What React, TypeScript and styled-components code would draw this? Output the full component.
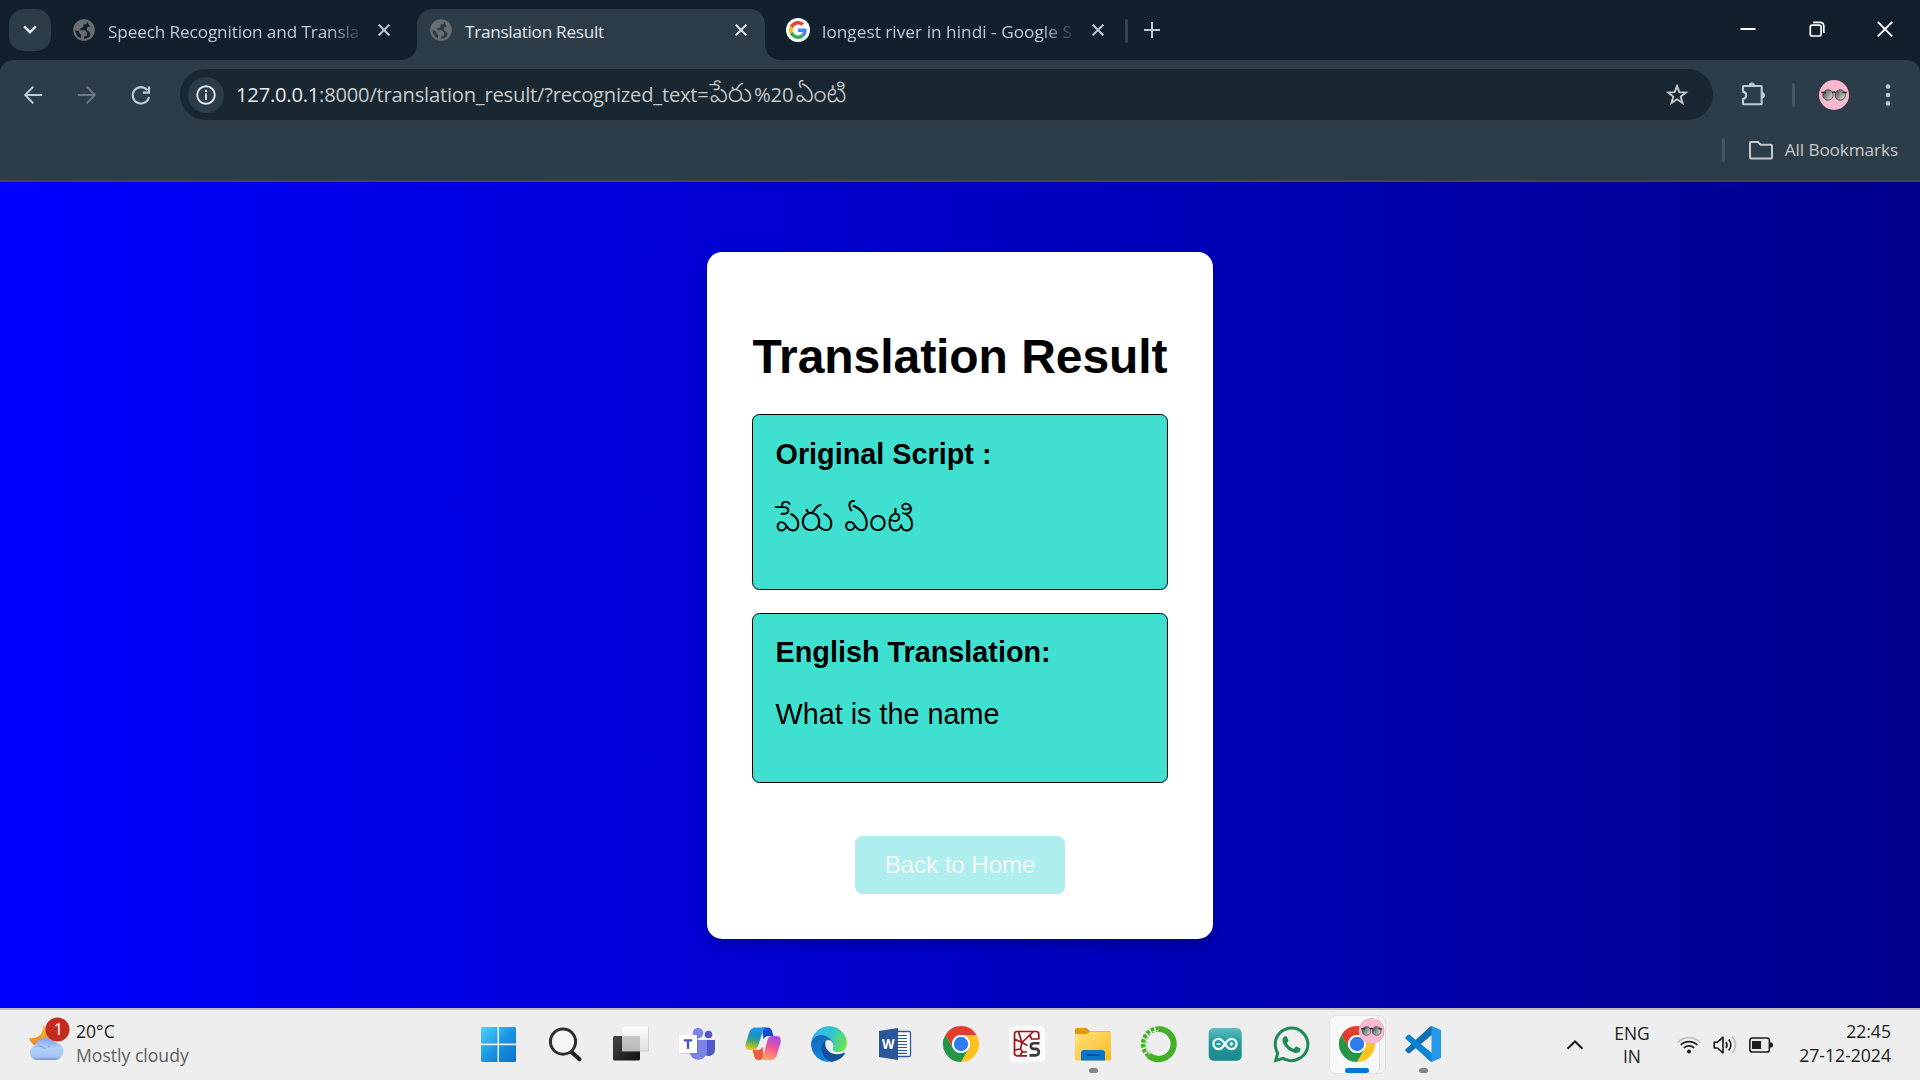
import React from "react";
import styled, { createGlobalStyle } from "styled-components";
import { FaWhatsapp } from "react-icons/fa";

const ui = `"Open Sans", "Noto Sans Telugu", sans-serif`;
const arial = `"Liberation Sans", "Noto Sans Telugu", sans-serif`;

const Global = createGlobalStyle`
  body { margin: 0; overflow: hidden; }
  *, *::before, *::after { box-sizing: border-box; }
  svg { display: block; flex: none; overflow: visible; }
`;

const Desktop = styled.div`
  width: 1920px;
  height: 1080px;
  display: flex;
  flex-direction: column;
  font-family: ${ui};
  background: #11202c;
`;

/* ---------- Tab strip ---------- */
const TabStrip = styled.header`
  height: 60px;
  flex: none;
  display: flex;
  align-items: flex-start;
  padding: 9px 0 0 9px;
  color: #b9cbdd;
`;
const TabSearch = styled.div`
  width: 42px;
  height: 42px;
  border-radius: 15px;
  background: #2d3c49;
  display: grid;
  place-items: center;
  color: #e3e8ec;
`;
const Tab = styled.div<{ $w: number; $active?: boolean; $pl: number; $pr: number }>`
  position: relative;
  width: ${(p) => p.$w}px;
  height: 51px;
  display: flex;
  align-items: center;
  padding: 0 ${(p) => p.$pr}px 9px ${(p) => p.$pl}px;
  border-radius: 15px 15px 0 0;
  background: ${(p) => (p.$active ? "#2d3c49" : "transparent")};
  color: ${(p) => (p.$active ? "#e3e6e9" : "#b9cbdd")};
  ${(p) =>
    p.$active &&
    `&::before, &::after {
      content: ""; position: absolute; bottom: 0; width: 15px; height: 15px;
    }
    &::before { left: -15px; background: radial-gradient(circle at 0 0, transparent 14.5px, #2d3c49 15.2px); }
    &::after { right: -15px; background: radial-gradient(circle at 100% 0, transparent 14.5px, #2d3c49 15.2px); }`}
`;
const TabTitle = styled.span<{ $track: number; $fade?: boolean }>`
  margin-right: auto;
  white-space: nowrap;
  font-size: 17.2px;
  letter-spacing: ${(p) => p.$track}px;
  line-height: 26px;
  padding-top: 3px;
  ${(p) => p.$fade && "mask-image: linear-gradient(90deg, #000 calc(100% - 30px), rgba(0, 0, 0, 0.15));"}
`;
const Favicon = styled.span<{ $gap: number }>`
  margin-right: ${(p) => p.$gap}px;
`;
const StripDivider = styled.i`
  width: 3px;
  height: 24px;
  margin: 10px 16px 0 10px;
  border-radius: 2px;
  background: #33434f;
`;
const NewTab = styled.div`
  height: 42px;
  display: grid;
  place-items: center;
`;
const WindowButtons = styled.div`
  margin: 12px 27px 0 auto;
  display: flex;
  gap: 52.5px;
  color: #fff;
`;

/* ---------- Toolbar ---------- */
const Toolbar = styled.div`
  height: 122px;
  flex: none;
  border-radius: 13px 13px 0 0;
  background: #2d3c49;
  border-bottom: 2px solid #474747;
  color: #b9cbdd;
`;
const NavRow = styled.div`
  height: 69px;
  display: flex;
  align-items: center;
  padding-left: 21px;
`;
const NavIcon = styled.div<{ $dim?: boolean }>`
  width: 24px;
  margin-right: 30px;
  color: ${(p) => (p.$dim ? "#6b7884" : "#b9cbdd")};
`;
const UrlBar = styled.div`
  width: 1533px;
  height: 51px;
  margin-left: -3px;
  border-radius: 26px;
  background: #182732;
  display: flex;
  align-items: center;
  padding: 0 24px 0 8px;
  color: #c7c9cb;
`;
const InfoChip = styled.div`
  width: 36px;
  height: 36px;
  border-radius: 50%;
  background: #2d3c49;
  display: grid;
  place-items: center;
  color: #e6e6e6;
  margin-right: 12px;
`;
const Url = styled.div`
  display: flex;
  align-items: baseline;
  height: 51px;
  line-height: 51px;
  margin-right: auto;
  font-size: 20.2px;
  letter-spacing: -0.23px;
  white-space: pre;
`;
const Host = styled.span`
  color: #e8eaec;
`;
const Escape = styled.span`
  letter-spacing: -0.1px;
  padding: 0 1px 0 2px;
`;
const UrlTelugu = styled.span`
  font-family: "Noto Sans Telugu", sans-serif;
  font-size: 26.5px;
  font-weight: 300;
  letter-spacing: 0;
  padding-left: 1px;
`;
const Extension = styled.div`
  margin: 0 26px 0 28px;
`;
const ToolDivider = styled.i<{ $mr: number }>`
  width: 3px;
  height: 24px;
  border-radius: 2px;
  background: #455461;
  margin-right: ${(p) => p.$mr}px;
`;
const AvatarWrap = styled.div`
  margin-right: 36px;
`;
const BookmarkRow = styled.div`
  height: 42px;
  display: flex;
  align-items: center;
  justify-content: flex-end;
  padding-right: 22px;
  color: #c7c9cb;
`;
const BookmarkText = styled.span`
  margin-left: 12px;
  font-size: 17.2px;
  letter-spacing: -0.1px;
  line-height: 26px;
`;

/* ---------- Page ---------- */
const Page = styled.main`
  flex: 1;
  display: flex;
  justify-content: center;
  align-items: flex-start;
  padding-top: 70px;
  background: linear-gradient(to right, #0000ff, #00008b);
  font-family: ${arial};
  color: #000;
`;
const Card = styled.section`
  width: 506px;
  height: 687px;
  padding: 45px;
  border-radius: 15px;
  background: #fff;
  box-shadow: 0 6px 12px rgba(0, 0, 0, 0.2);
  display: flex;
  flex-direction: column;
`;
const Heading = styled.h1`
  margin: 32px 0 30px;
  font-size: 48px;
  letter-spacing: -0.06px;
  line-height: 55px;
  text-align: center;
  white-space: nowrap;
`;
const ResultBox = styled.div<{ $h: number; $pt: number }>`
  height: ${(p) => p.$h}px;
  margin-bottom: 23px;
  padding: ${(p) => p.$pt}px 22.5px 0;
  border: 1px solid #000;
  border-radius: 7.5px;
  background: #40e0d0;
  font-size: 28.8px;
  line-height: 33px;
`;
const Label = styled.strong`
  display: block;
`;
const Value = styled.p`
  margin: 29px 0;
`;
const TeluguValue = styled(Value)`
  margin-top: 34px;
  font-family: "Noto Sans Telugu", sans-serif;
  font-size: 36.5px;
  font-weight: 300;
  line-height: 39px;
`;
const HomeButton = styled.button`
  align-self: center;
  width: 210px;
  height: 58px;
  margin-top: 30px;
  border: 0;
  border-radius: 7.5px;
  background: #afeeee;
  color: #f5f5f5;
  font: 24px ${arial};
`;

/* ---------- Taskbar ---------- */
const Taskbar = styled.footer`
  height: 72px;
  flex: none;
  display: flex;
  align-items: stretch;
  background: #eee;
  border-top: 2px solid #bcbcbc;
  color: #1b1b1b;
`;
const Weather = styled.div`
  width: 466px;
  display: flex;
  padding: 10px 0 0 28px;
  font-size: 17.6px;
  line-height: 24px;
`;
const WeatherText = styled.div`
  margin: -1px 0 0 6px;
`;
const Muted = styled.div`
  color: #5f5f5f;
`;
const Apps = styled.div`
  display: flex;
`;
const Slot = styled.div`
  width: 66px;
  display: grid;
  grid-template-rows: 58px 5px;
  justify-items: center;
  align-items: center;
`;
const IconCell = styled.div<{ $active?: boolean }>`
  width: 57px;
  height: 59px;
  margin-top: 10px;
  display: grid;
  place-items: center;
  border-radius: 7px;
  ${(p) =>
    p.$active &&
    `background: #f8f8f8; border: 1.5px solid #e2e2e2;
     box-shadow: inset -6px 0 0 -1px #f2f2f2, inset -7px 0 0 -1px #e0e0e0;`}
`;
const Marker = styled.i<{ $on?: boolean }>`
  width: ${(p) => (p.$on ? 24 : 9)}px;
  height: 5px;
  border-radius: 3px;
  background: ${(p) => (p.$on ? "#0078d4" : "#868686")};
`;
const Tray = styled.div`
  flex: 1;
  display: flex;
  align-items: center;
  justify-content: flex-end;
  padding-right: 29px;
  font-size: 17.6px;
  line-height: 24px;
`;
const Lang = styled.div`
  width: 60px;
  margin: 0 15px 0 18px;
  font-size: 17.4px;
  line-height: 23px;
  text-align: center;
`;
const TrayIcons = styled.div`
  display: flex;
  gap: 12px;
  align-items: center;
  padding-bottom: 1px;
`;
const Clock = styled.div`
  width: 118px;
  text-align: right;
  padding-bottom: 4px;
`;

/* ---------- Glyphs ---------- */
const stroke = { fill: "none", stroke: "currentColor", strokeLinecap: "square" as const };

const Globe = () => (
  <svg width="22" height="22" viewBox="0 0 22 22">
    <circle cx="11" cy="11" r="9.8" fill="none" stroke="#6a6d70" strokeWidth="2" />
    <path
      d="M2 8C4 3 9 1 14 2.4L13.6 5 10.5 5.6 10 8.4 7.4 9V11.2H12L14 13.4V16.4L11.4 17.2 10.8 20.6 8 20.2 8.2 16 6.4 14.6 6.2 12.4 2 11ZM14 2.4C18 3 20.8 7 20.8 11 20.4 15 18.6 18 16 19.6L17.6 15.4 16.2 12.6 13.6 11 14.2 8.4 16.8 7.4Z"
      fill="#6a6d70"
    />
  </svg>
);
const Cross = () => (
  <svg width="12" height="12" viewBox="0 0 12 12">
    <path d="M1.3 1.3L10.7 10.7M10.7 1.3L1.3 10.7" {...stroke} strokeWidth="2" />
  </svg>
);
const GoogleG = () => (
  <svg width="24" height="24" viewBox="0 0 24 24">
    <circle cx="12" cy="12" r="12" fill="#fff" />
    <g transform="translate(3 3) scale(.375)">
      <path fill="#EA4335" d="M24 9.5c3.54 0 6.71 1.22 9.21 3.6l6.85-6.85C35.9 2.38 30.47 0 24 0 14.62 0 6.51 5.38 2.56 13.22l7.98 6.19C12.43 13.72 17.74 9.5 24 9.5z" />
      <path fill="#4285F4" d="M46.98 24.55c0-1.57-.15-3.09-.38-4.55H24v9.02h12.94c-.58 2.96-2.26 5.48-4.78 7.18l7.73 6c4.51-4.18 7.09-10.36 7.09-17.65z" />
      <path fill="#FBBC05" d="M10.53 28.59c-.48-1.45-.76-2.99-.76-4.59s.27-3.14.76-4.59l-7.98-6.19C.92 16.46 0 20.12 0 24c0 3.88.92 7.54 2.56 10.78l7.97-6.19z" />
      <path fill="#34A853" d="M24 48c6.48 0 11.93-2.13 15.89-5.81l-7.73-6c-2.15 1.45-4.92 2.3-8.16 2.3-6.26 0-11.57-4.22-13.47-9.91l-7.98 6.19C6.51 42.62 14.62 48 24 48z" />
    </g>
  </svg>
);
const Arrow = ({ flip }: { flip?: boolean }) => (
  <svg width="24" height="24" viewBox="0 0 24 24">
    <path transform={flip ? "matrix(-1 0 0 1 24 0)" : undefined} d="M20.2 12H5M11.5 4.3L4.2 12l7.3 7.7" {...stroke} strokeWidth="2" />
  </svg>
);
const Reload = () => (
  <svg width="24" height="24" viewBox="0 0 24 24">
    <path d="M18.4 7.2A8.2 8.2 0 1 0 20 14M20 3.5V9.6H13.8" {...stroke} strokeLinecap="butt" strokeWidth="2.1" />
  </svg>
);
const Info = () => (
  <svg width="22" height="22" viewBox="0 0 22 22">
    <circle cx="11" cy="11" r="8.8" {...stroke} strokeWidth="1.9" />
    <path d="M11 10.5V15" {...stroke} strokeWidth="1.8" />
    <circle cx="11" cy="6.9" r="1.2" fill="currentColor" />
  </svg>
);
const Star = () => (
  <svg width="24" height="24" viewBox="0 0 24 24">
    <path d="M12 3.1l2.3 6.1 6.6.3-5.2 4.1 1.8 6.4L12 16.3 6.5 20l1.8-6.4-5.2-4.1 6.6-.3z" {...stroke} strokeWidth="1.9" />
  </svg>
);
const Puzzle = () => (
  <svg width="25" height="25" viewBox="0 0 25 25">
    <path
      d="M2 4.6Q2 4 2.6 4H20Q20.7 4 20.7 4.7V21.4Q20.7 22.3 20 22.3H2.8Q2 22.3 2 21.5V17Q5.2 16.4 5.2 13.3T2 9.6Z"
      {...stroke}
      strokeWidth="2.1"
    />
    <path d="M7.8 3.6a3 3 0 0 1 6 0zM21 10.3a3 3 0 0 1 0 6z" fill="currentColor" />
  </svg>
);
const Avatar = ({ size, x, y }: { size: number; x?: number; y?: number }) => (
  <svg width={size} height={size} viewBox="0 0 30 30" x={x} y={y}>
    <defs>
      <linearGradient id="lens" x1="0" y1="0" x2="1" y2="0.6">
        <stop offset="0" stopColor="#3d4244" />
        <stop offset="1" stopColor="#c9d2d2" />
      </linearGradient>
    </defs>
    <circle cx="15" cy="15" r="15" fill="#f8b9cf" />
    <g fill="url(#lens)" stroke="#57514b" strokeWidth="1">
      <circle cx="9" cy="15" r="5.2" />
      <circle cx="21.2" cy="15" r="5.2" />
    </g>
    <path d="M2.4 12.4H7M13 12.6Q15 11.4 17 12.6M23.5 12.4H27.8" stroke="#2c2623" strokeWidth="1.5" fill="none" />
  </svg>
);
const Dots = () => (
  <svg width="6" height="24" viewBox="0 0 6 24" fill="currentColor">
    <circle cx="3" cy="3.6" r="2.3" />
    <circle cx="3" cy="12" r="2.3" />
    <circle cx="3" cy="20.4" r="2.3" />
  </svg>
);
const Folder = () => (
  <svg width="24" height="19" viewBox="0 0 24 19">
    <path d="M1 2Q1 1 2 1H9L11.6 3.7H22Q23 3.7 23 4.7V16.5Q23 17.5 22 17.5H2Q1 17.5 1 16.5Z" {...stroke} strokeWidth="2" />
  </svg>
);

/* ---------- Taskbar icons, 36px grid ---------- */
const App36 = ({ children }: { children: React.ReactNode }) => (
  <svg width="36" height="36" viewBox="0 0 36 36">{children}</svg>
);
const ChromeShapes = () => (
  <>
    <path fill="#e33b2e" d="M2.41 9A18 18 0 0 1 33.59 9L18 9A9 9 0 0 0 10.2 22.5Z" />
    <path fill="#fcc31e" d="M33.59 9A18 18 0 0 1 18 36L25.8 22.5A9 9 0 0 0 18 9Z" />
    <path fill="#269547" d="M18 36A18 18 0 0 1 2.41 9L10.2 22.5A9 9 0 0 0 25.8 22.5Z" />
    <circle cx="18" cy="18" r="9" fill="#fff" />
    <circle cx="18" cy="18" r="7.2" fill="#2f7bf0" />
  </>
);
const WeatherIcon = () => (
  <svg width="42" height="42" viewBox="0 0 42 42">
    <defs>
      <linearGradient id="moon" x1="0" y1="0" x2="0" y2="1">
        <stop offset="0" stopColor="#f7c046" />
        <stop offset="1" stopColor="#ee8116" />
      </linearGradient>
      <linearGradient id="cloud" x1="0" y1="0" x2="0" y2="1">
        <stop offset="0" stopColor="#7fa3ea" />
        <stop offset=".45" stopColor="#b3cff8" />
        <stop offset=".85" stopColor="#a3c4f6" />
        <stop offset="1" stopColor="#6d92de" />
      </linearGradient>
    </defs>
    <path d="M15 5Q24 10 22 20L10 26Q3 25 1 18 9 19 13 14 15.5 10 15 5Z" fill="url(#moon)" />
    <path d="M8.5 40A7.5 7.5 0 0 1 7 25.500A11.5 11.5 0 0 1 27 22.500A8.8 8.8 0 0 1 28 40Z" fill="url(#cloud)" />
    <path d="M20 28Q22 22.500 28.500 22.800M8 26.500Q13 25 17.500 29" fill="none" stroke="#7c9fe6" strokeWidth="1.2" opacity=".7" />
    <circle cx="29.500" cy="9.500" r="12" fill="#c42b1c" />
    <text x="30.500" y="15.300" fontSize="16.5" textAnchor="middle" fill="#fff" fontFamily="Open Sans">1</text>
  </svg>
);
const StartIcon = () => (
  <svg width="37" height="36" viewBox="0.500 0 37 36">
    <defs>
      <linearGradient id="win" x1="0" y1="0" x2="1" y2="1">
        <stop offset="0" stopColor="#4fd3fe" />
        <stop offset=".5" stopColor="#1b96e3" />
        <stop offset="1" stopColor="#0670cb" />
      </linearGradient>
    </defs>
    <path d="M2 1H17V17.600H.500V2.500Q.500 1 2 1ZM18.500 1H34Q35.500 1 35.500 2.500V17.600H18.500ZM.500 19.200H17V36H2Q.500 36 .500 34.500ZM18.500 19.200H35.500V34.500Q35.500 36 34 36H18.500Z" fill="url(#win)" />
  </svg>
);
const SearchIcon = () => (
  <App36>
    <path d="M24 25.500L32.500 33.200" stroke="#1e1e1e" strokeWidth="4.2" strokeLinecap="round" />
    <circle cx="16" cy="15.600" r="12.600" fill="#f6f6f6" stroke="#2d2d2d" strokeWidth="3" />
  </App36>
);
const TaskViewIcon = () => (
  <App36>
    <defs>
      <linearGradient id="tv" x1="0" y1="0" x2="1" y2="1">
        <stop offset="0" stopColor="#4b4845" />
        <stop offset="1" stopColor="#0e0e0e" />
      </linearGradient>
      <linearGradient id="tvl" x1="0" y1="0" x2="0" y2="1">
        <stop offset="0" stopColor="#fff" stopOpacity=".96" />
        <stop offset="1" stopColor="#dcdcdc" stopOpacity=".85" />
      </linearGradient>
    </defs>
    <rect x="0" y="10" width="27" height="24.500" rx="1.500" fill="url(#tv)" />
    <rect x="9" y="1" width="27" height="24" rx="1.500" fill="url(#tvl)" />
    <path d="M9 10H27V25H9Z" fill="#aaa" opacity=".45" />
    <path d="M9 25H35.500V1.500" fill="none" stroke="#c9c9c9" strokeWidth=".8" />
  </App36>
);
const TeamsIcon = () => (
  <App36>
    <circle cx="29.500" cy="8.500" r="3.800" fill="#5059c9" />
    <path d="M24 14H36V23.500A6.500 6.500 0 0 1 24 27Z" fill="#5059c9" />
    <circle cx="19" cy="7" r="5.200" fill="#7b83eb" />
    <path d="M10.500 14H28V26A8.800 8.800 0 0 1 10.500 26Z" fill="#7b83eb" />
    <rect x="1.500" y="10" width="17.500" height="17.500" fill="#5a61c8" opacity=".5" />
    <rect x="0" y="9" width="18" height="18" fill="#fff" />
    <path d="M4.800 14.300H13.200M9 14V23" stroke="#4b53bc" strokeWidth="2.3" />
  </App36>
);
const CopilotIcon = () => (
  <App36>
    <defs>
      <linearGradient id="cpa" x1=".4" y1="0" x2=".2" y2="1">
        <stop offset="0" stopColor="#1f9be6" />
        <stop offset=".35" stopColor="#1790c8" />
        <stop offset=".6" stopColor="#47a86b" />
        <stop offset="1" stopColor="#f4cc12" />
      </linearGradient>
      <linearGradient id="cpb" x1=".7" y1="0" x2=".3" y2="1">
        <stop offset="0" stopColor="#a44fec" />
        <stop offset=".45" stopColor="#ee5596" />
        <stop offset="1" stopColor="#ffab5c" />
      </linearGradient>
    </defs>
    <path d="M17 1.500H22.500Q26 1.500 27 5L28.500 10H23Q20 10 18.500 13.500Z" fill="#154bd0" />
    <path d="M19 34H13.500Q10 34 9.500 31L7.500 24H13Q16 24 17.500 20.500Z" fill="#ee5a3b" />
    <path d="M10.500 1.500H22Q19 1.500 17.600 6L13 20Q11.700 24 8.500 24H5Q-.500 24 .600 18L4 7Q5.500 1.500 10.500 1.500Z" fill="url(#cpa)" />
    <path d="M25.500 34H14Q17 34 18.400 29.500L22.500 14Q23.700 10 27 10H31Q37 10 35.500 17L32 28.500Q30.500 34 25.500 34Z" fill="url(#cpb)" />
  </App36>
);
const EdgeIcon = () => (
  <App36>
    <defs>
      <linearGradient id="eda" x1="0" y1=".3" x2="1" y2=".6">
        <stop offset="0" stopColor="#2fb6ee" />
        <stop offset=".5" stopColor="#2fc4cf" />
        <stop offset="1" stopColor="#6be350" />
      </linearGradient>
      <linearGradient id="edb" x1="0" y1="0" x2=".3" y2="1">
        <stop offset="0" stopColor="#1565b5" />
        <stop offset="1" stopColor="#0f86dc" />
      </linearGradient>
    </defs>
    <path d="M.200 16A18 18 0 0 1 36 17C36 23 32 26 27 26 23 26 21.500 24.500 21.500 23 23.500 20.500 22 15 18 12 10 7 2 10 .200 16Z" fill="url(#eda)" />
    <path d="M.100 16.500C3 8 12 7.500 17.500 11.500 20 13 21.500 15 22 17 20 13.500 16 13 13.500 16.500 10 23 15 34 24 34.700 13 39-.500 31 .100 16.500Z" fill="url(#edb)" />
    <path d="M14.500 14.800C7 20 11 33 20.500 35.700 26.500 35.300 31.500 32 34 27.600 34 26.600 33 26.500 32 27.200 22 31 12.500 25 14.500 14.800Z" fill="#10509f" />
  </App36>
);
const WordIcon = () => (
  <App36>
    <rect x="18" y="5.500" width="15.500" height="25" rx="1.500" fill="#fff" stroke="#2b579a" strokeWidth="1.3" />
    <path d="M20 9.500H30M20 12.500H30M20 15.500H30M20 18.500H30M20 21.500H30M20 24.500H30M20 27.300H30" stroke="#2b579a" strokeWidth="1.2" />
    <path d="M2 5L21 2V34L2 31Z" fill="#2b579a" />
    <text x="11.300" y="23" fontSize="14" fontWeight="700" textAnchor="middle" fill="#fff" fontFamily="Open Sans" textLength="12.5" lengthAdjust="spacingAndGlyphs">W</text>
  </App36>
);
const SpyderIcon = () => (
  <App36>
    <rect width="36" height="36" rx="4.500" fill="#fafafa" />
    <path
      d="M18 29.800H8Q5.500 29.800 5.500 27.500V8Q5.500 5.500 8 5.500H27Q29.800 5.500 29.800 8V13.500M5.500 13L13 16.500L18.500 19.500M13 16.500L9.500 6M13 16.500L11.500 23L5.500 24M11.500 23L13.500 26L11 29.500M13.500 26H18M13 16.500L24.500 5.500M21 9L22.500 13H29.500"
      fill="none"
      stroke="#97161b"
      strokeWidth="1.7"
    />
    <path d="M30.500 17.200H25Q21.800 17.200 21.800 20T25 22.900H26.500Q29.800 22.900 29.800 26.100T26.500 29.400H20.500" fill="none" stroke="#fafafa" strokeWidth="5" />
    <path d="M30.500 17.200H25Q21.800 17.200 21.800 20T25 22.900H26.500Q29.800 22.900 29.800 26.100T26.500 29.400H20.500" fill="none" stroke="#3b3b3b" strokeWidth="2.6" />
  </App36>
);
const ExplorerIcon = () => (
  <App36>
    <defs>
      <linearGradient id="fo" x1="0" y1="0" x2="1" y2="1">
        <stop offset="0" stopColor="#ffe07c" />
        <stop offset="1" stopColor="#fbbc1f" />
      </linearGradient>
    </defs>
    <path d="M0 3.500Q0 2 1.500 2H11.500L15 5.300H34.500Q36 5.300 36 7V12H0Z" fill="#dd9c0c" />
    <path d="M0 8H11.500L15.500 5.800H36V33Q36 34.500 34.500 34.500H1.500Q0 34.500 0 33Z" fill="url(#fo)" />
    <path d="M6 34.500V27Q6 24 9 24H27Q30 24 30 27V34.500Z" fill="#0b74cb" />
    <path d="M11.500 29H24.500" stroke="#064c90" strokeWidth="1.6" />
  </App36>
);
const AnacondaIcon = () => (
  <App36>
    <path d="M17.500 3A15 15 0 1 1 8 29.500" fill="none" stroke="#44b02a" strokeWidth="6.2" />
    <path d="M8 29.500A15 15 0 0 1 17.500 3" fill="none" stroke="#44b02a" strokeWidth="5.6" strokeDasharray="3.4 1.4" />
    <path d="M9 28A13.600 13.600 0 0 1 17 4.600" fill="none" stroke="#eee" strokeWidth="1.3" strokeDasharray="2.6 1.6" />
  </App36>
);
const ArduinoIcon = () => (
  <App36>
    <defs>
      <linearGradient id="ar" x1="0" y1="0" x2="0" y2="1">
        <stop offset="0" stopColor="#5fbcbd" />
        <stop offset=".45" stopColor="#1f9ba2" />
        <stop offset="1" stopColor="#1b868c" />
      </linearGradient>
    </defs>
    <rect x="1.700" y="2" width="33" height="32.800" rx="5" fill="url(#ar)" />
    <path d="M18 18C15.500 14 13.500 12.900 11.500 12.900A5.100 5.100 0 0 0 11.500 23.100C13.500 23.100 15.500 22 18 18ZM18 18C20.500 14 22.500 12.900 24.500 12.900A5.100 5.100 0 0 1 24.500 23.100C22.500 23.100 20.500 22 18 18Z" fill="none" stroke="#eef6f6" strokeWidth="2.4" />
    <path d="M9.500 18H13.500M22.500 18H26.500M24.500 16V20" stroke="#eef6f6" strokeWidth="1.4" />
  </App36>
);
const CodeIcon = () => (
  <App36>
    <path d="M26.500 0L36 4V32L26.500 36Z" fill="#2499ec" />
    <path d="M26.800 9L4.500 27.200Q3.600 27.800 2.800 27.100L.600 25Q-.300 24 .600 23.200L25 .700 26.800 0Z" fill="#0f6fb6" />
    <path d="M26.800 27L4.500 8.800Q3.600 8.200 2.800 8.900L.600 11Q-.300 12 .600 12.800L25 35.300 26.800 36Z" fill="#0a84d2" />
  </App36>
);
const ActiveChrome = () => (
  <App36>
    <ChromeShapes />
    <circle cx="32.500" cy="5" r="12.800" fill="#b7a9ad" />
    <Avatar size={25} x={20} y={-7.5} />
  </App36>
);

const apps: { icon: React.ReactNode; open?: boolean; active?: boolean }[] = [
  { icon: <StartIcon /> },
  { icon: <SearchIcon /> },
  { icon: <TaskViewIcon /> },
  { icon: <TeamsIcon /> },
  { icon: <CopilotIcon /> },
  { icon: <EdgeIcon /> },
  { icon: <WordIcon /> },
  { icon: <App36><ChromeShapes /></App36> },
  { icon: <SpyderIcon /> },
  { icon: <ExplorerIcon />, open: true },
  { icon: <AnacondaIcon /> },
  { icon: <ArduinoIcon /> },
  { icon: <FaWhatsapp size={41} color="#1d8a55" /> },
  { icon: <ActiveChrome />, active: true },
  { icon: <CodeIcon />, open: true },
];

export default function App() {
  return (
    <Desktop>
      <Global />
      <TabStrip>
        <TabSearch>
          <svg width="14" height="8" viewBox="0 0 14 8">
            <path d="M2 1.200L7 6.200L12 1.200" {...stroke} strokeWidth="2.4" />
          </svg>
        </TabSearch>
        <Tab $w={366} $pl={22} $pr={27}>
          <Favicon $gap={13}><Globe /></Favicon>
          <TabTitle $track={-0.13} $fade>Speech Recognition and Transla</TabTitle>
          <Cross />
        </Tab>
        <Tab $w={348} $pl={13} $pr={18} $active>
          <Favicon $gap={13}><Globe /></Favicon>
          <TabTitle $track={-0.28}>Translation Result</TabTitle>
          <Cross />
        </Tab>
        <Tab $w={350} $pl={21} $pr={11}>
          <Favicon $gap={12}><GoogleG /></Favicon>
          <TabTitle $track={0.04} $fade>longest river in hindi - Google S</TabTitle>
          <Cross />
        </Tab>
        <StripDivider />
        <NewTab>
          <svg width="16" height="16" viewBox="0 0 16 16">
            <path d="M8 1V15M1 8H15" {...stroke} strokeWidth="2" />
          </svg>
        </NewTab>
        <WindowButtons>
          <svg width="16" height="16" viewBox="0 0 16 16"><path d="M.500 8H15.500" stroke="#fff" strokeWidth="2" /></svg>
          <svg width="16" height="16" viewBox="0 0 16 16" fill="none" stroke="#fff" strokeWidth="1.7">
            <rect x="1.300" y="4.200" width="10.800" height="10.800" rx="2" />
            <path d="M4 1.300H11Q14.800 1.300 14.800 5V12" />
          </svg>
          <svg width="16" height="16" viewBox="0 0 16 16"><path d="M.800 1L15.200 15.400M15.200 1L.800 15.400" stroke="#fff" strokeWidth="1.8" /></svg>
        </WindowButtons>
      </TabStrip>

      <Toolbar>
        <NavRow>
          <NavIcon><Arrow /></NavIcon>
          <NavIcon $dim><Arrow flip /></NavIcon>
          <NavIcon><Reload /></NavIcon>
          <UrlBar>
            <InfoChip><Info /></InfoChip>
            <Url>
              <Host>127.0.0.1</Host>
              <span>:8000/translation_result/?recognized_text=</span>
              <UrlTelugu>పేరు</UrlTelugu>
              <Escape>%20</Escape>
              <UrlTelugu>ఏంటి</UrlTelugu>
            </Url>
            <Star />
          </UrlBar>
          <Extension><Puzzle /></Extension>
          <ToolDivider $mr={24} />
          <AvatarWrap><Avatar size={30} /></AvatarWrap>
          <Dots />
        </NavRow>
        <BookmarkRow>
          <ToolDivider $mr={24} />
          <Folder />
          <BookmarkText>All Bookmarks</BookmarkText>
        </BookmarkRow>
      </Toolbar>

      <Page>
        <Card>
          <Heading>Translation Result</Heading>
          <ResultBox $h={176} $pt={23}>
            <Label>Original Script :</Label>
            <TeluguValue>పేరు ఏంటి</TeluguValue>
          </ResultBox>
          <ResultBox $h={170} $pt={22}>
            <Label>English Translation:</Label>
            <Value>What is the name</Value>
          </ResultBox>
          <HomeButton>Back to Home</HomeButton>
        </Card>
      </Page>

      <Taskbar>
        <Weather>
          <WeatherIcon />
          <WeatherText>
            <div>20°C</div>
            <Muted>Mostly cloudy</Muted>
          </WeatherText>
        </Weather>
        <Apps>
          {apps.map((a, i) => (
            <Slot key={i}>
              <IconCell $active={a.active}>{a.icon}</IconCell>
              {(a.open || a.active) && <Marker $on={a.active} />}
            </Slot>
          ))}
        </Apps>
        <Tray>
          <svg width="18" height="10" viewBox="0 0 18 10"><path d="M1.500 8.700L9 1.500L16.500 8.700" fill="none" stroke="#1b1b1b" strokeWidth="2" /></svg>
          <Lang>
            <div>ENG</div>
            <div>IN</div>
          </Lang>
          <TrayIcons>
            <svg width="24" height="18" viewBox="0 0 24 18" fill="none" stroke="#1b1b1b" strokeWidth="1.7">
              <path d="M.800 6.500A15.500 15.500 0 0 1 23.200 6.500" stroke="#c4c4c4" />
              <path d="M3.700 9A11.700 11.700 0 0 1 20.300 9M6.800 12A7.400 7.400 0 0 1 17.200 12" />
              <circle cx="12" cy="15.500" r="2" fill="#1b1b1b" stroke="none" />
            </svg>
            <svg width="24" height="20" viewBox="0 0 24 20" fill="none" stroke="#1b1b1b" strokeWidth="1.6">
              <path d="M1.200 7.200V13H4.500L10 17.800V2.200L4.500 7.200Z" strokeLinejoin="round" />
              <path d="M13 7Q15 10 13 13M15.700 4.500Q20 10 15.700 15.500" />
              <path d="M19 1.500Q26 10 19 18.500" stroke="#bdbdbd" />
            </svg>
            <svg width="24" height="16" viewBox="0 0 24 16">
              <rect x=".900" y="1" width="19.500" height="14" rx="2.600" fill="none" stroke="#1b1b1b" strokeWidth="1.6" />
              <rect x="3" y="4" width="9" height="8" fill="#1b1b1b" />
              <path d="M21 5.500H22.500Q24 5.500 24 8T22.500 10.500H21Z" fill="#1b1b1b" />
            </svg>
          </TrayIcons>
          <Clock>
            <div>22:45</div>
            <div>27-12-2024</div>
          </Clock>
        </Tray>
      </Taskbar>
    </Desktop>
  );
}
